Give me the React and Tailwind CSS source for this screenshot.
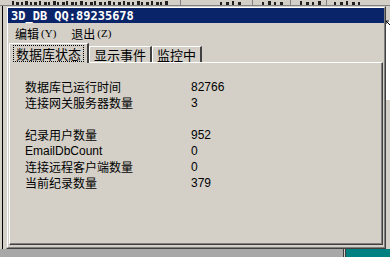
const CJK = { fontFamily: '"Noto Sans CJK SC", "Liberation Sans", sans-serif' };

const ROWS = [
  { label: '数据库已运行时间', value: '82766' },
  { label: '连接网关服务器数量', value: '3' },
  null,
  { label: '纪录用户数量', value: '952' },
  { label: 'EmailDbCount', value: '0', latin: true },
  { label: '连接远程客户端数量', value: '0' },
  { label: '当前纪录数量', value: '379' },
];

// bottom edges of glyphs from the window behind, clipped by the dialog
const GLYPH_MARKS = [12, 16, 21, 25, 30, 34, 39, 44, 48, 53, 57, 62, 66, 71, 75, 80, 85, 90, 94, 99, 104, 108, 113, 118, 123, 127, 132, 137, 141, 146, 151, 156, 160, 165, 220, 226, 232, 238, 262, 268, 274, 280, 300, 306, 312, 318, 334, 340, 346, 352, 358];

function MenuItem({ label, hot }) {
  return (
    <span className="flex items-center text-[12px] leading-none text-black" style={CJK}>
      {label}
      <span className="ml-[2px] text-[11px]" style={{ fontFamily: '"Liberation Serif", serif' }}>({hot})</span>
    </span>
  );
}

function Tab({ label, active }) {
  if (active) {
    return (
      <div className="relative z-10 -mb-px flex h-[20px] items-center border-l border-t border-r-2 border-l-white border-t-white border-r-[#404040] bg-[#d4d0c8] px-[3px] rounded-tl-[2px]">
        <span className="border border-dotted border-black px-[2px] text-[13px] leading-[15px] text-black" style={CJK}>{label}</span>
      </div>
    );
  }
  return (
    <div className="flex h-[16px] items-center self-end border-l border-t border-r-2 border-l-white border-t-white border-r-[#404040] bg-[#d4d0c8] px-[4px]">
      <span className="text-[13px] leading-[15px] text-black" style={CJK}>{label}</span>
    </div>
  );
}

export default function App() {
  return (
    <div className="relative h-[257px] w-[390px] overflow-hidden bg-[#d4d0c8]">
      {/* background window behind */}
      <div className="flex h-full flex-col">
        <div className="h-[6px] border-b border-[#808080] bg-[#d4d0c8]">
          <svg width="390" height="5" className="block">
            {GLYPH_MARKS.map((x, i) => (
              <rect key={i} x={x} y={i % 3 === 0 ? 1 : 2} width={i % 2 ? 3 : 2} height={i % 3 === 0 ? 4 : 3} fill="#202020" />
            ))}
            <rect x="180" y="0" width="1" height="5" fill="#808080" />
            <rect x="252" y="0" width="1" height="5" fill="#808080" />
            <rect x="290" y="0" width="1" height="5" fill="#808080" />
            <rect x="326" y="0" width="1" height="5" fill="#808080" />
          </svg>
        </div>
        <div className="flex flex-1">
          <div className="w-[2px]" />
          <div className="w-px bg-black" />
          <div className="flex-1" />
          <div className="mt-[14px] flex w-[4px] flex-col">
            <svg width="4" height="10" className="block bg-white">
              <path d="M0 1 L4 5 M0 1 L0 4 M0 1 L3 1" stroke="#000" strokeWidth="1" fill="none" />
            </svg>
            <div className="h-[70px] bg-white" />
          </div>
        </div>
        <div className="flex h-[8px]">
          <div className="flex-1 bg-[#a8a8a8]" />
          <div className="w-[3px] border-x border-[#404040] bg-[#d4d0c8]" />
          <div className="w-[44px] bg-[#008080]" />
        </div>
      </div>

      {/* dialog window */}
      <div className="absolute left-[6px] top-[6px] h-[243px] w-[380px] border border-t-[#d4d0c8] border-l-[#d4d0c8] border-r-[#404040] border-b-[#404040] bg-[#d4d0c8]">
        <div className="flex h-full flex-col border border-t-white border-l-white border-r-[#808080] border-b-[#808080]">
          <div className="flex h-[15px] items-center bg-[#0a246a] pl-[3px]">
            <span className="text-[12px] font-bold leading-none text-white" style={{ fontFamily: '"DejaVu Sans Mono", "Liberation Mono", monospace' }}>
              3D_DB QQ:89235678
            </span>
          </div>

          <div className="flex h-[20px] items-center gap-[15px] pl-[7px] pt-[1px]">
            <MenuItem label="编辑" hot="Y" />
            <MenuItem label="退出" hot="Z" />
          </div>

          <div className="flex h-[19px] items-end pl-[1px]">
            <Tab label="数据库状态" active />
            <Tab label="显示事件" />
            <Tab label="监控中" />
          </div>

          <div className="mx-px mb-[2px] flex-1 border border-t-white border-l-white border-r-[#404040] border-b-[#404040]">
            <div className="h-full border-r border-b border-[#808080] pl-[15px] pt-[16px]">
              {ROWS.map((r, i) =>
                r ? (
                  <div key={i} className="flex h-[16px] items-center text-[12px] text-black">
                    <span className="w-[166px]" style={r.latin ? { fontFamily: '"Liberation Sans", sans-serif' } : CJK}>{r.label}</span>
                    <span style={{ fontFamily: '"Liberation Sans", sans-serif' }}>{r.value}</span>
                  </div>
                ) : (
                  <div key={i} className="h-[16px]" />
                )
              )}
            </div>
          </div>
        </div>
      </div>
    </div>
  );
}
